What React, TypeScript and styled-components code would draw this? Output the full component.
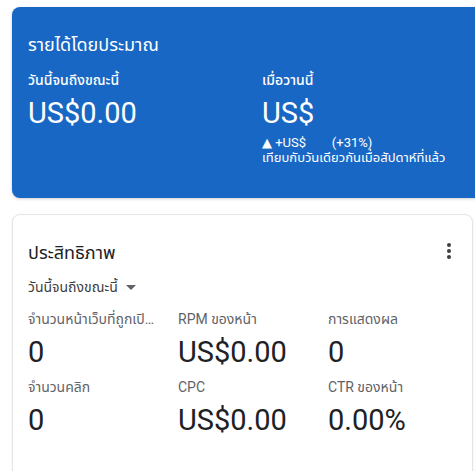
import React from "react";
import styled, { createGlobalStyle } from "styled-components";

const GlobalStyle = createGlobalStyle`
  html, body {
    margin: 0;
    padding: 0;
    background: #ffffff;
    overflow: hidden;
  }
  body {
    font-family: Roboto, "Noto Sans", "Noto Sans Thai", "DejaVu Sans", sans-serif;
    -webkit-font-smoothing: antialiased;
  }
`;

const Page = styled.div`
  width: 475px;
  height: 471px;
  padding: 7px 0 0 12px;
  box-sizing: border-box;
  display: flex;
  flex-direction: column;
  gap: 16px;
  overflow: hidden;
`;

const EarningsCard = styled.div`
  flex-shrink: 0;
  background: #1967c4;
  border-radius: 8px 0 0 8px;
  margin-right: -12px;
  height: 191px;
  padding: 26px 16px 0 16px;
  box-sizing: border-box;
  color: #ffffff;
  box-shadow: 0 1px 3px rgba(60, 64, 67, 0.25);
`;

const CardTitle = styled.div<{ $dark?: boolean }>`
  font-size: 18px;
  line-height: 24px;
  color: ${({ $dark }) => ($dark ? "#202124" : "#ffffff")};
`;

const EarningsRow = styled.div`
  display: grid;
  grid-template-columns: 234px 1fr;
  margin-top: 13px;
`;

const EarningsLabel = styled.div`
  font-size: 14px;
  font-weight: 500;
  line-height: 20px;
`;

const EarningsValue = styled.div`
  font-size: 29px;
  line-height: 36px;
  margin-top: 5px;
`;

const Delta = styled.div<{ $sub?: boolean }>`
  font-size: 13px;
  line-height: 15px;
  margin-top: ${({ $sub }) => ($sub ? "0" : "4px")};
  white-space: pre;
`;

const PerformanceCard = styled.div`
  flex-shrink: 0;
  background: #ffffff;
  border: 1px solid #e3e5e8;
  border-radius: 8px;
  width: 461px;
  height: 300px;
  box-sizing: border-box;
  padding: 26px 15px 0 15px;
  box-shadow: 0 1px 2px rgba(60, 64, 67, 0.12);
`;

const TitleRow = styled.div`
  display: flex;
  align-items: center;
  justify-content: space-between;
`;

const MenuButton = styled.div`
  width: 24px;
  height: 24px;
  display: flex;
  align-items: center;
  justify-content: center;
  margin: -4px -4px 0 0;
  color: #3c4043;
`;

const RangePicker = styled.div`
  display: inline-flex;
  align-items: center;
  gap: 8px;
  margin-top: 12px;
  font-size: 14px;
  line-height: 20px;
  color: #3c4043;
`;

const Caret = styled.span`
  width: 0;
  height: 0;
  border-left: 5px solid transparent;
  border-right: 5px solid transparent;
  border-top: 5px solid #5f6368;
`;

const MetricsGrid = styled.div`
  display: grid;
  grid-template-columns: 150px 150px 1fr;
  row-gap: 8px;
  margin-top: 12px;
`;

const Metric = styled.div`
  display: flex;
  flex-direction: column;
  min-width: 0;
`;

const MetricLabel = styled.div`
  font-size: 14px;
  line-height: 20px;
  color: #5f6368;
  max-width: 128px;
  white-space: nowrap;
  overflow: hidden;
  text-overflow: ellipsis;
`;

const MetricValue = styled.div`
  font-size: 29px;
  line-height: 34px;
  color: #202124;
  margin-top: 6px;
`;

const metrics = [
  { label: "จำนวนหน้าเว็บที่ถูกเปิดดู", value: "0" },
  { label: "RPM ของหน้า", value: "US$0.00" },
  { label: "การแสดงผล", value: "0" },
  { label: "จำนวนคลิก", value: "0" },
  { label: "CPC", value: "US$0.00" },
  { label: "CTR ของหน้า", value: "0.00%" },
];

const KebabIcon = () => (
  <svg width="4" height="16" viewBox="0 0 4 16" fill="#3c4043">
    <circle cx="2" cy="2" r="2" />
    <circle cx="2" cy="8" r="2" />
    <circle cx="2" cy="14" r="2" />
  </svg>
);

export default function App() {
  return (
    <>
      <GlobalStyle />
      <Page>
        <EarningsCard>
          <CardTitle>รายได้โดยประมาณ</CardTitle>
          <EarningsRow>
            <div>
              <EarningsLabel>วันนี้จนถึงขณะนี้</EarningsLabel>
              <EarningsValue>US$0.00</EarningsValue>
            </div>
            <div>
              <EarningsLabel>เมื่อวานนี้</EarningsLabel>
              <EarningsValue>US$</EarningsValue>
              <Delta>{"▲ +US$        (+31%)"}</Delta>
              <Delta $sub>เทียบกับวันเดียวกันเมื่อสัปดาห์ที่แล้ว</Delta>
            </div>
          </EarningsRow>
        </EarningsCard>
        <PerformanceCard>
          <TitleRow>
            <CardTitle $dark>ประสิทธิภาพ</CardTitle>
            <MenuButton>
              <KebabIcon />
            </MenuButton>
          </TitleRow>
          <RangePicker>
            วันนี้จนถึงขณะนี้
            <Caret />
          </RangePicker>
          <MetricsGrid>
            {metrics.map((m) => (
              <Metric key={m.label}>
                <MetricLabel>{m.label}</MetricLabel>
                <MetricValue>{m.value}</MetricValue>
              </Metric>
            ))}
          </MetricsGrid>
        </PerformanceCard>
      </Page>
    </>
  );
}
